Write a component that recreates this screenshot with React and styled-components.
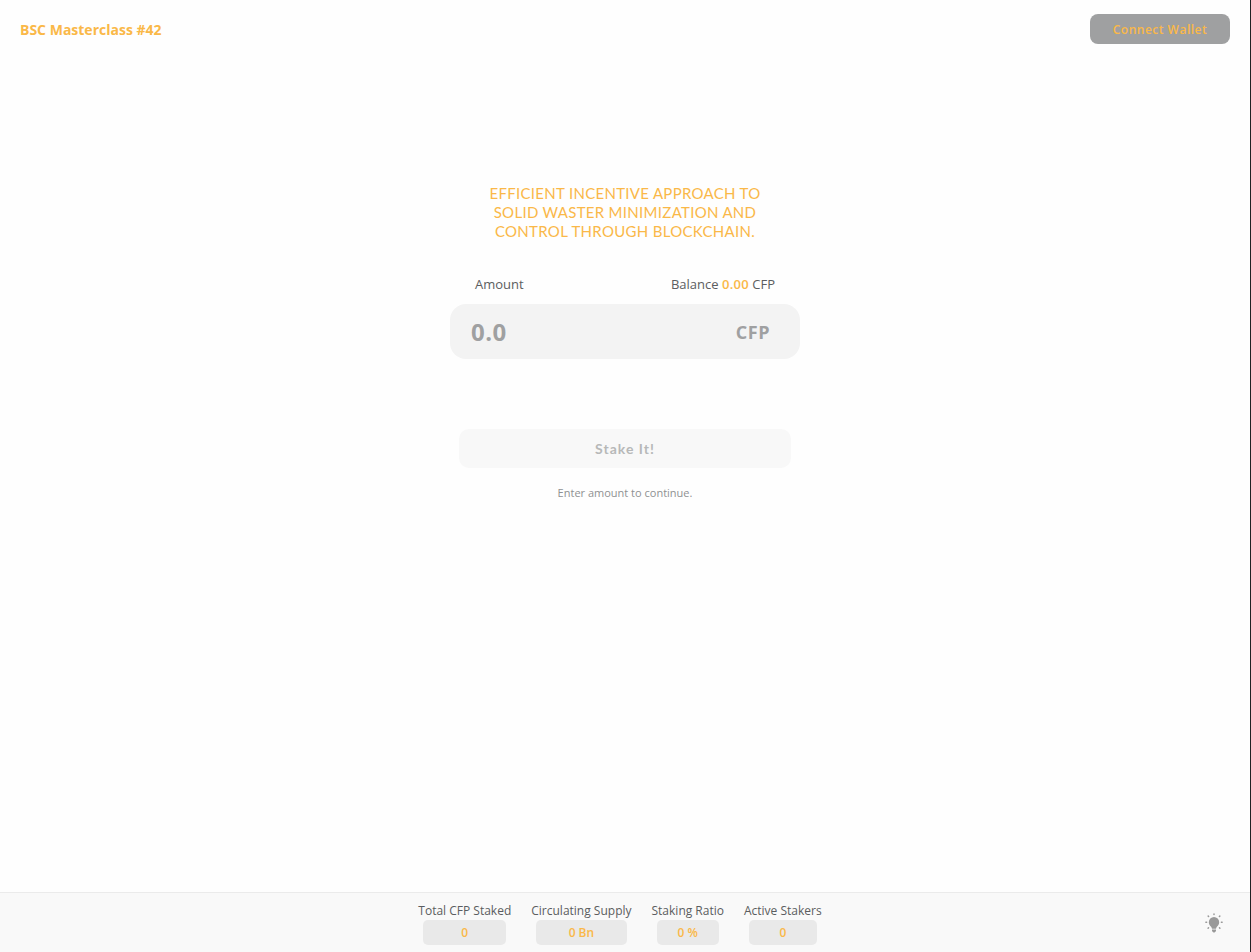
import React, { useState } from "react";
import styled, { createGlobalStyle } from "styled-components";

const GlobalStyle = createGlobalStyle`
  *, *::before, *::after { box-sizing: border-box; }
  body {
    margin: 0;
    background: #fefefe;
    color: #5b5d60;
    font-family: "Open Sans", sans-serif;
  }
`;

const Page = styled.div`
  display: flex;
  flex-direction: column;
  min-height: 100vh;
  border-right: 1px solid #202124;
`;

const Header = styled.header`
  display: flex;
  align-items: center;
  justify-content: space-between;
  padding: 14px 20px;
`;

const Brand = styled.a`
  padding-top: 2px;
  color: #fab848;
  font-size: 14px;
  font-weight: 700;
  line-height: 20px;
  text-decoration: none;
`;

const WalletButton = styled.button`
  width: 140px;
  height: 30px;
  padding: 2px 0 0;
  border: 0;
  border-radius: 8px;
  background: #9fa0a1;
  color: #fab848;
  font: 600 12px/18px "Open Sans", sans-serif;
  letter-spacing: 0.5px;
  cursor: pointer;
`;

const Main = styled.main`
  flex: 1;
  display: flex;
  flex-direction: column;
  align-items: center;
  padding: 126px 20px 40px;
`;

const Heading = styled.h1`
  max-width: 300px;
  margin: 0 0 34px;
  color: #fab848;
  font: 400 15px/19px Lato, sans-serif;
  letter-spacing: 0.02em;
  text-align: center;
`;

const StakeForm = styled.form`
  display: flex;
  flex-direction: column;
  align-items: center;
  width: 100%;
  max-width: 350px;
`;

const FieldInfo = styled.div`
  display: flex;
  justify-content: space-between;
  width: 100%;
  padding: 0 25px;
  margin-bottom: 11px;
  font-size: 13px;
  line-height: 18px;
`;

const Highlight = styled.span`
  color: #fab848;
  font-weight: 600;
  letter-spacing: 0.02em;
`;

const Field = styled.div`
  display: flex;
  align-items: center;
  width: 100%;
  height: 55px;
  padding: 0 30px 0 21px;
  margin-bottom: 70px;
  border-radius: 16px;
  background: #f3f3f3;
`;

const AmountInput = styled.input`
  flex: 1;
  min-width: 0;
  padding: 0;
  border: 0;
  outline: 0;
  background: transparent;
  color: #5b5d60;
  font: 700 24px/34px "Open Sans", sans-serif;
  letter-spacing: 0.5px;

  &::placeholder {
    color: #9fa0a1;
    opacity: 1;
  }
`;

const Unit = styled.span`
  color: #9fa0a1;
  font-size: 18px;
  font-weight: 700;
  line-height: 24px;
  letter-spacing: 0.5px;
`;

const StakeButton = styled.button`
  width: 332px;
  max-width: 100%;
  height: 39px;
  padding: 0;
  margin-bottom: 16px;
  border: 0;
  border-radius: 10px;
  background: #f8f8f8;
  color: #b7b8b8;
  font: 700 14px/20px Lato, sans-serif;
  letter-spacing: 1px;
`;

const Hint = styled.p`
  margin: 0;
  color: #8f9192;
  font-size: 11px;
  line-height: 18px;
`;

const Footer = styled.footer`
  display: grid;
  grid-template-columns: 1fr auto 1fr;
  align-items: center;
  min-height: 60px;
  padding: 0 26px 0 16px;
  border-top: 1px solid #ebebeb;
  background: #f9f9f9;
`;

const Stats = styled.dl`
  grid-column: 2;
  display: flex;
  gap: 20px;
  margin: 0;
`;

const Stat = styled.div`
  font-size: 12px;
`;

const StatLabel = styled.dt`
  padding-top: 2px;
  line-height: 18px;
`;

const StatValue = styled.dd`
  margin: 0 5px;
  border-radius: 5px;
  background: #e9e9e9;
  color: #fab848;
  font-weight: 600;
  line-height: 25px;
  text-align: center;
`;

const ThemeButton = styled.button`
  justify-self: end;
  display: flex;
  padding: 0;
  border: 0;
  background: transparent;
  color: #999999;
  cursor: pointer;
`;

const stats = [
  ["Total CFP Staked", "0"],
  ["Circulating Supply", "0 Bn"],
  ["Staking Ratio", "0 %"],
  ["Active Stakers", "0"],
];

function BulbIcon() {
  return (
    <svg width="20" height="20" viewBox="0 0 20 20" fill="currentColor" aria-hidden="true">
      <path d="M10 4a5.2 5.2 0 0 0-5.2 5.2c0 2.2 1.3 3.3 2.3 4.6.5.7.7 1.2.9 1.900h4c.2-.7.4-1.2.9-1.900 1-1.300 2.300-2.400 2.300-4.600A5.200 5.200 0 0 0 10 4Z" />
      <path d="M8 16.400h4v1.400c0 .6-.5 1-1 1.200l-.4.5H9.400l-.4-.5c-.5-.2-1-.6-1-1.200Z" />
      <g stroke="currentColor" strokeWidth="1.500" strokeLinecap="round">
        <path d="M10 1v.6M4.200 3.100l.4.400M15.800 3.100l-.4.400M1.900 9.200h.7M17.400 9.200h.7M4.100 15.200l.4-.4M15.900 15.200l-.4-.4" />
      </g>
    </svg>
  );
}

export default function App() {
  const [amount, setAmount] = useState("");

  return (
    <>
      <GlobalStyle />
      <Page>
        <Header>
          <Brand href="#">BSC Masterclass #42</Brand>
          <WalletButton type="button">Connect Wallet</WalletButton>
        </Header>
        <Main>
          <Heading>
            EFFICIENT INCENTIVE APPROACH TO SOLID WASTER MINIMIZATION AND CONTROL THROUGH BLOCKCHAIN.
          </Heading>
          <StakeForm onSubmit={(event) => event.preventDefault()}>
            <FieldInfo>
              <label htmlFor="amount">Amount</label>
              <span>
                Balance <Highlight>0.00</Highlight> CFP
              </span>
            </FieldInfo>
            <Field>
              <AmountInput
                id="amount"
                inputMode="decimal"
                placeholder="0.0"
                value={amount}
                onChange={(event) => setAmount(event.target.value)}
              />
              <Unit>CFP</Unit>
            </Field>
            <StakeButton type="submit" disabled={!amount}>
              Stake It!
            </StakeButton>
            <Hint>Enter amount to continue.</Hint>
          </StakeForm>
        </Main>
        <Footer>
          <Stats>
            {stats.map(([label, value]) => (
              <Stat key={label}>
                <StatLabel>{label}</StatLabel>
                <StatValue>{value}</StatValue>
              </Stat>
            ))}
          </Stats>
          <ThemeButton type="button" aria-label="Toggle theme">
            <BulbIcon />
          </ThemeButton>
        </Footer>
      </Page>
    </>
  );
}
